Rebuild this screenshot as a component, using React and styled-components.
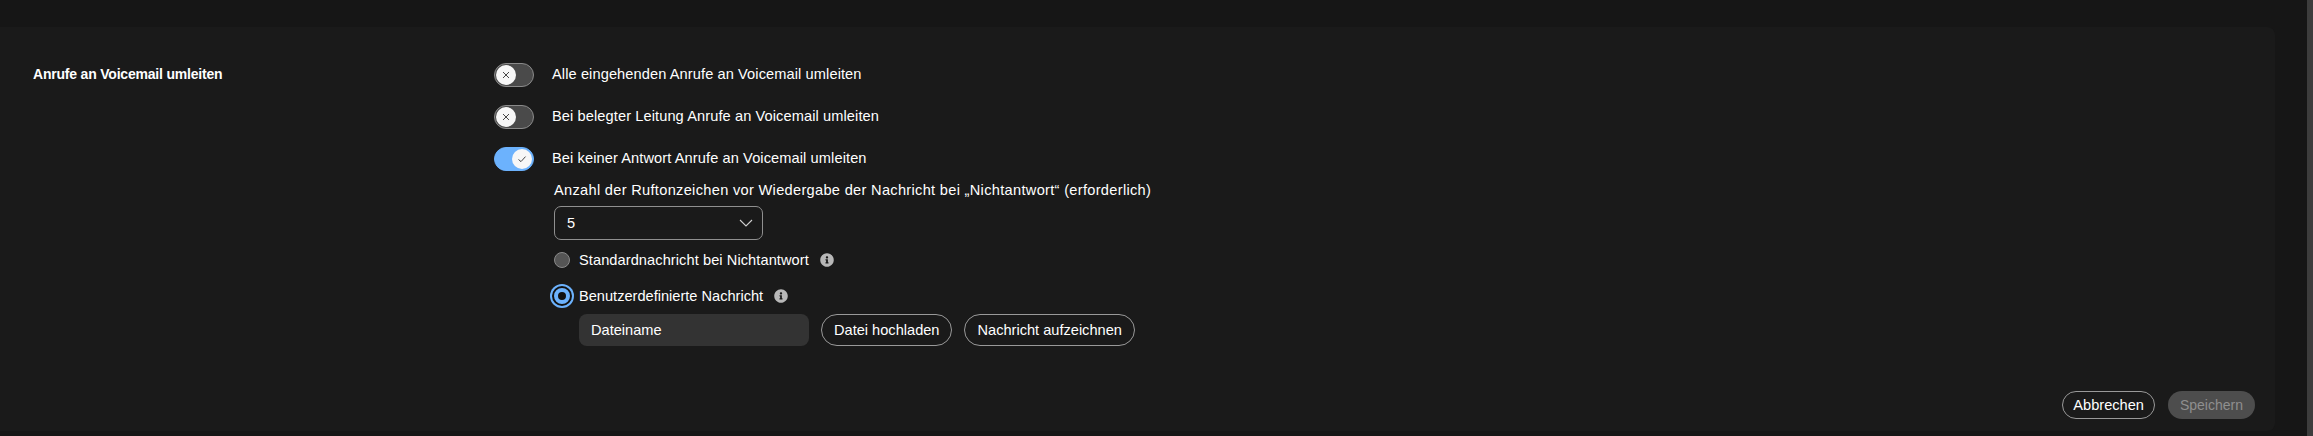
import React from 'react';
import styled, { createGlobalStyle } from 'styled-components';
import { FaInfoCircle } from 'react-icons/fa';

const GlobalStyle = createGlobalStyle`
  html, body {
    margin: 0;
    background: #161616;
    font-family: "Liberation Sans", Arial, sans-serif;
    color: #fff;
  }
`;

const forwardRules = [
  { label: 'Alle eingehenden Anrufe an Voicemail umleiten', on: false },
  { label: 'Bei belegter Leitung Anrufe an Voicemail umleiten', on: false },
  { label: 'Bei keiner Antwort Anrufe an Voicemail umleiten', on: true },
];

const Toggle = ({ on }) => (
  <Track $on={on}>
    <Knob $on={on}>
      {on ? (
        <svg width="10" height="10" viewBox="0 0 10 10" fill="none" stroke="#333" strokeWidth="0.9">
          <path d="M1.5 5.5 L4 7.6 L8.5 2.6" />
        </svg>
      ) : (
        <svg width="10" height="10" viewBox="0 0 10 10" fill="none" stroke="#333" strokeWidth="0.9">
          <path d="M2 2 L8 8 M8 2 L2 8" />
        </svg>
      )}
    </Knob>
  </Track>
);

const App = () => (
  <Page>
    <GlobalStyle />
    <Main>
      <Panel>
        <Section>
          <SectionTitle>Anrufe an Voicemail umleiten</SectionTitle>
          <Options>
            {forwardRules.map((rule) => (
              <ToggleRow key={rule.label}>
                <Toggle on={rule.on} />
                <RowLabel>{rule.label}</RowLabel>
              </ToggleRow>
            ))}
            <NoAnswer>
              <RingsLabel>Anzahl der Ruftonzeichen vor Wiedergabe der Nachricht bei „Nichtantwort“ (erforderlich)</RingsLabel>
              <Select>
                5
                <svg width="14" height="8" viewBox="0 0 14 8" fill="none" stroke="#cfcfcf" strokeWidth="1.1">
                  <path d="M1 1 L7 7 L13 1" />
                </svg>
              </Select>
              <RadioRow>
                <RadioSlot><Radio /></RadioSlot>
                <DefaultLabel>Standardnachricht bei Nichtantwort</DefaultLabel>
                <InfoIcon />
              </RadioRow>
              <RadioRow $selected>
                <RadioSlot><Radio $selected /></RadioSlot>
                <Text>Benutzerdefinierte Nachricht</Text>
                <InfoIcon />
              </RadioRow>
              <UploadRow>
                <FileName>Dateiname</FileName>
                <PillButton>Datei hochladen</PillButton>
                <PillButton>Nachricht aufzeichnen</PillButton>
              </UploadRow>
            </NoAnswer>
          </Options>
        </Section>
        <Footer>
          <PillButton $small>Abbrechen</PillButton>
          <SaveButton disabled>Speichern</SaveButton>
        </Footer>
      </Panel>
    </Main>
    <Scrollbar />
  </Page>
);

export default App;

// Styled-components
const Page = styled.div`
  display: flex;
  height: 436px;
  overflow: hidden;
`;

const Main = styled.div`
  flex: 1;
  padding: 27px 32px 5px 0;
`;

const Scrollbar = styled.div`
  width: 6px;
  background: #3d3d3d;
`;

const Panel = styled.div`
  height: 100%;
  box-sizing: border-box;
  display: flex;
  flex-direction: column;
  padding: 36px 20px 12px 33px;
  background: #1a1a1a;
  border-radius: 0 8px 8px 0;
`;

const Section = styled.div`
  display: flex;
`;

const SectionTitle = styled.div`
  width: 461px;
  font-size: 14px;
  font-weight: 700;
  letter-spacing: -0.2px;
  line-height: 22px;
`;

const Options = styled.div`
  display: flex;
  flex-direction: column;
  gap: 18px;
`;

const ToggleRow = styled.div`
  display: flex;
  align-items: center;
  gap: 18px;
  height: 24px;
`;

const Text = styled.span`
  font-size: 14.6px;
  line-height: 20px;
  white-space: nowrap;
`;

const RowLabel = styled(Text)`
  padding-bottom: 2px;
  letter-spacing: 0.1px;
`;

const RingsLabel = styled(Text)`
  letter-spacing: 0.31px;
`;

const DefaultLabel = styled(Text)`
  letter-spacing: 0.08px;
`;

const Track = styled.div`
  width: 40px;
  height: 24px;
  box-sizing: border-box;
  display: flex;
  align-items: center;
  justify-content: ${(p) => (p.$on ? 'flex-end' : 'flex-start')};
  padding: 0 1px;
  border-radius: 12px;
  background: ${(p) => (p.$on ? '#6cb2fd' : '#4a4a4a')};
  border: 1px solid ${(p) => (p.$on ? '#6cb2fd' : '#8a8a8a')};
`;

const Knob = styled.div`
  width: 20px;
  height: 20px;
  display: flex;
  align-items: center;
  justify-content: center;
  border-radius: 50%;
  background: #f7f7f7;
`;

const NoAnswer = styled.div`
  display: flex;
  flex-direction: column;
  margin: -9px 0 0 60px;
`;

const Select = styled.div`
  width: 209px;
  height: 34px;
  box-sizing: border-box;
  margin-top: 6px;
  display: flex;
  align-items: center;
  justify-content: space-between;
  padding: 0 9px 0 12px;
  border: 1px solid #8f8f8f;
  border-radius: 7px;
  font-size: 14.6px;
`;

const RadioRow = styled.div`
  display: flex;
  align-items: center;
  height: 20px;
  margin-top: ${(p) => (p.$selected ? '16px' : '10px')};
`;

const RadioSlot = styled.div`
  width: 25px;
  display: flex;
  justify-content: flex-start;
`;

const Radio = styled.div`
  width: 16px;
  height: 16px;
  box-sizing: border-box;
  border-radius: 50%;
  ${(p) =>
    p.$selected
      ? `
    background: #111;
    border: 4px solid #6cb2fd;
    box-shadow: 0 0 0 2px #111, 0 0 0 4px #6cb2fd;
  `
      : `
    background: #555;
    border: 1px solid #8a8a8a;
  `}
`;

const InfoIcon = styled(FaInfoCircle)`
  width: 14px;
  height: 14px;
  margin-left: 11px;
  color: #b8b8b8;
`;

const UploadRow = styled.div`
  display: flex;
  align-items: center;
  gap: 12px;
  margin: 8px 0 0 25px;
`;

const FileName = styled.div`
  width: 230px;
  height: 32px;
  box-sizing: border-box;
  display: flex;
  align-items: center;
  padding: 0 12px;
  background: #333;
  border-radius: 8px;
  font-size: 14.6px;
`;

const PillButton = styled.button`
  height: ${(p) => (p.$small ? '28px' : '32px')};
  padding: 0 ${(p) => (p.$small ? '10px' : '12px')};
  background: transparent;
  border: 1px solid #999;
  border-radius: 16px;
  color: #fff;
  font-family: inherit;
  font-size: 14.6px;
`;

const Footer = styled.div`
  margin-top: auto;
  display: flex;
  justify-content: flex-end;
  gap: 13px;
`;

const SaveButton = styled.button`
  height: 28px;
  padding: 0 12px;
  background: #4d4d4d;
  border: none;
  border-radius: 14px;
  color: #8f8f8f;
  font-family: inherit;
  font-size: 14px;
`;
